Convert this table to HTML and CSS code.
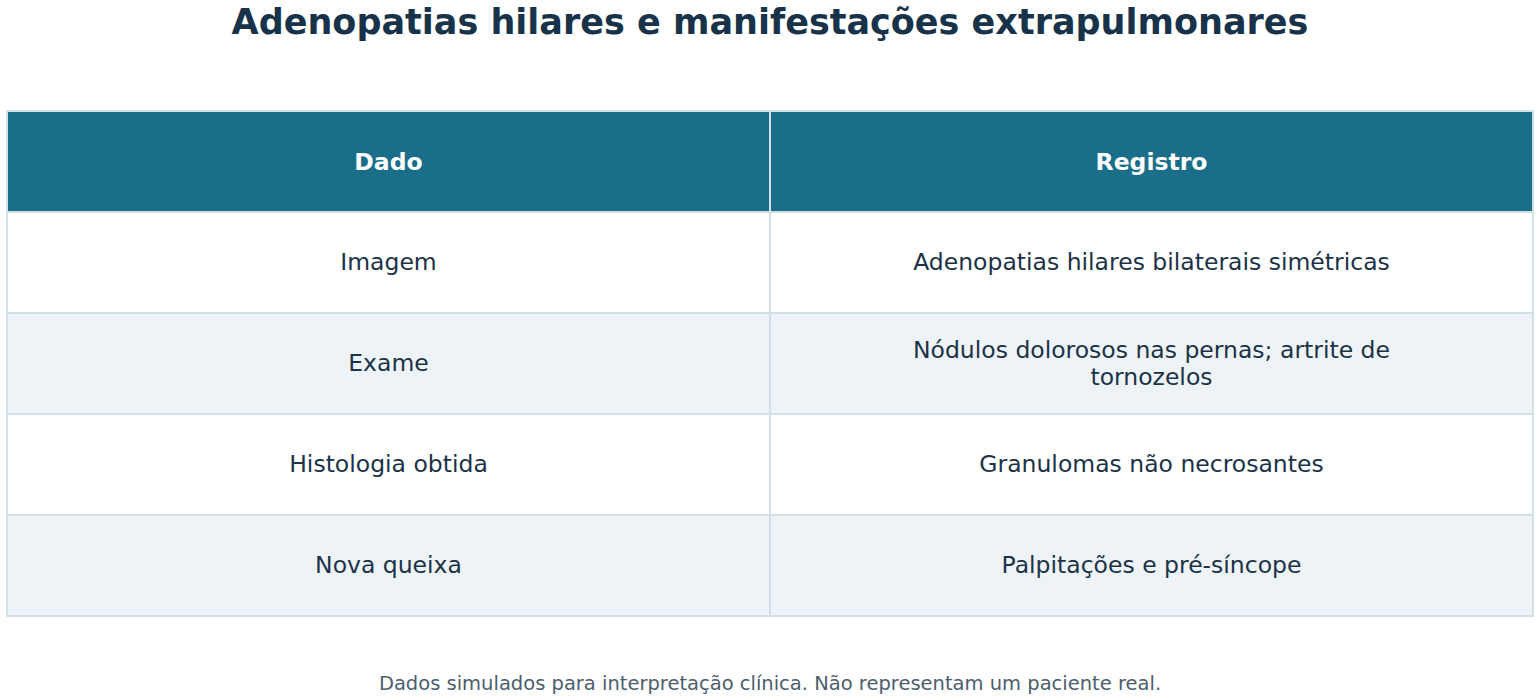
FILE: index.html
```html
<!DOCTYPE html>
<html lang="pt">
<head>
<meta charset="utf-8">
<title>Adenopatias hilares e manifestações extrapulmonares</title>
<link rel="stylesheet" href="styles.css">
</head>
<body>
<h1 class="title">Adenopatias hilares e manifestações extrapulmonares</h1>
<table class="data">
  <thead>
    <tr><th>Dado</th><th>Registro</th></tr>
  </thead>
  <tbody>
    <tr><td>Imagem</td><td><span class="cell">Adenopatias hilares bilaterais simétricas</span></td></tr>
    <tr class="alt"><td>Exame</td><td><span class="cell">Nódulos dolorosos nas pernas; artrite de tornozelos</span></td></tr>
    <tr><td>Histologia obtida</td><td><span class="cell">Granulomas não necrosantes</span></td></tr>
    <tr class="alt"><td>Nova queixa</td><td><span class="cell">Palpitações e pré-síncope</span></td></tr>
  </tbody>
</table>
<p class="note">Dados simulados para interpretação clínica. Não representam um paciente real.</p>
</body>
</html>
```
FILE: styles.css
```css
html, body {
  margin: 0;
  padding: 0;
  background: #ffffff;
}
body {
  font-family: "DejaVu Sans", sans-serif;
  color: #1b3247;
}
.title {
  margin: 0;
  padding-top: 2px;
  height: 110px;
  box-sizing: border-box;
  text-align: center;
  font-size: 35px;
  line-height: 40px;
  font-weight: bold;
  color: #183349;
}
.data {
  width: 1528px;
  margin: 0 6px;
  border-collapse: collapse;
  table-layout: fixed;
  border: 2px solid #d3dfe7;
}
.data th, .data td {
  border: 2px solid #d3dfe7;
  text-align: center;
  vertical-align: middle;
  height: 101px;
  padding: 0 20px;
  box-sizing: border-box;
}
.data th {
  background: #1a6e89;
  color: #ffffff;
  font-size: 23.5px;
  font-weight: bold;
}
.data td {
  font-size: 23.5px;
  line-height: 27px;
  color: #1b3247;
  background: #ffffff;
}
.data tr.alt td {
  background: #eef3f7;
}
.cell {
  display: inline-block;
  max-width: 520px;
}
.note {
  margin: 55px 0 0;
  text-align: center;
  font-size: 19.5px;
  line-height: 24px;
  color: #4c5e6d;
}
```
